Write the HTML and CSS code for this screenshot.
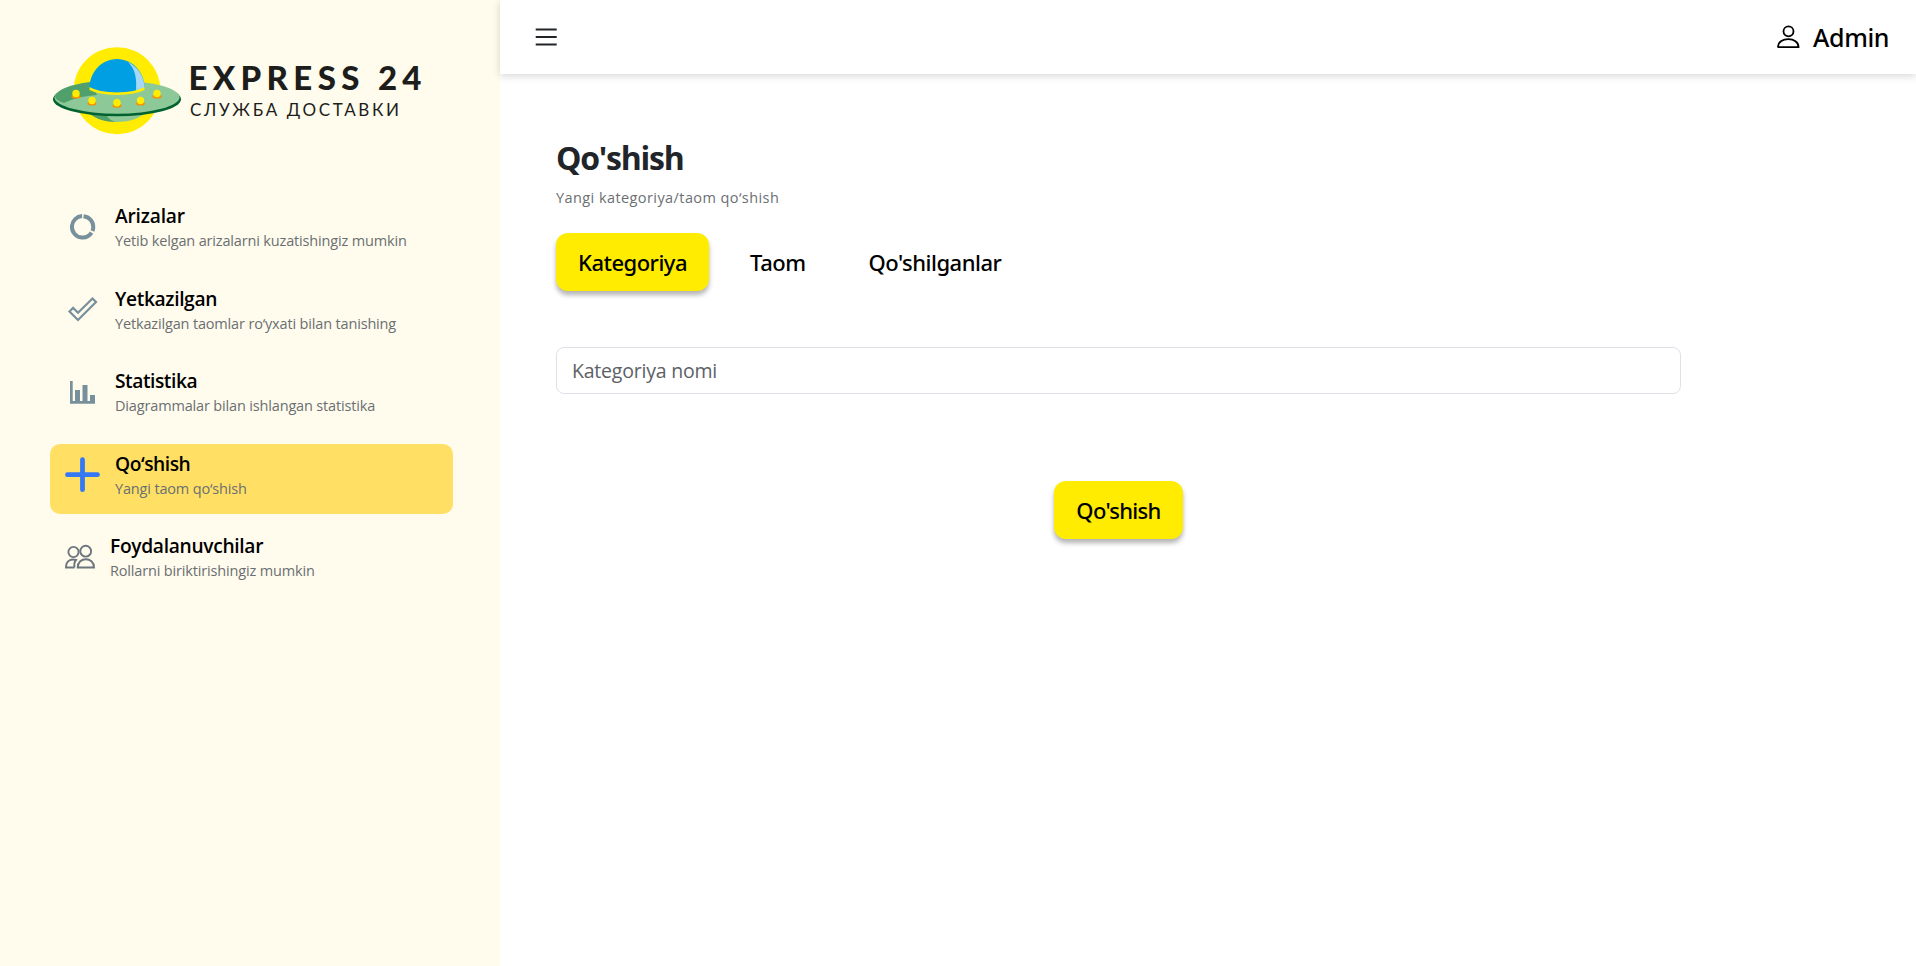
FILE: index.html
```
<!DOCTYPE html>
<html lang="uz">
<head>
<meta charset="utf-8">
<title>Express 24</title>
<link rel="stylesheet" href="styles.css">
</head>
<body>
<div class="layout">
  <aside class="sidebar">
    <svg class="logo" viewBox="0 0 400 100" width="400" height="100">
      <circle cx="67" cy="50.700" r="43.500" fill="#ffec00"/>
      <path d="M36 70 L98 70 Q88 82 67 82 Q48 82 36 70Z" fill="#8dc896"/>
      <path d="M36 70 L55 73 Q58 80 66 82 Q46 82 36 70Z" fill="#4fa06a"/>
      <ellipse cx="67" cy="59.300" rx="64" ry="17" fill="#00632f"/>
      <ellipse cx="67" cy="57.200" rx="62.500" ry="16.500" fill="#8dc898"/>
      <path d="M5 56 Q10 46 40 42 L47 55 Q28 56 14 63 Q5 60 5 56Z" fill="#4fa06a"/>
      <path d="M39.500 49 C39 33 51 19 67 19 C83 19 95 33 94.500 49 C84 54 50 54 39.500 49Z" fill="#009ee3"/>
      <path d="M78 22 C88 27 95 37 94.500 49 Q90 51 86 51.500 C87 37 85 29 78 22Z" fill="#a5d8f7"/>
      <path d="M39.500 47 Q48 52 67 52.500 Q86 52 94.500 47 V50 Q86 54.500 67 55 Q48 54.500 39.500 50Z" fill="#ffec00"/>
      <g fill="#f39200"><ellipse cx="26" cy="56.500" rx="4.500" ry="2"/><ellipse cx="42" cy="63.500" rx="4.500" ry="2"/><ellipse cx="67" cy="65.700" rx="4.500" ry="2"/><ellipse cx="90.500" cy="63.500" rx="4.500" ry="2"/><ellipse cx="107" cy="56.500" rx="4.500" ry="2"/></g>
      <g fill="#ffec00"><circle cx="26" cy="53.500" r="3.700"/><circle cx="42" cy="60.500" r="3.700"/><circle cx="67" cy="62.700" r="3.700"/><circle cx="90.500" cy="60.500" r="3.700"/><circle cx="107" cy="53.500" r="3.700"/></g>
      <text class="logo-name" x="138.500" y="50" textLength="233">EXPRESS 24</text>
      <text class="logo-sub" x="140" y="75.500" textLength="209">СЛУЖБА ДОСТАВКИ</text>
    </svg>
    <nav class="menu">
      <a class="item">
        <svg class="icon" viewBox="0 0 36 36"><circle cx="17.600" cy="17.800" r="10.700" fill="none" stroke="#78909c" stroke-width="4" stroke-dasharray="20 1.900 43.400 1.930" transform="rotate(-85 17.600 17.800)"/></svg>
        <span class="copy"><b class="t t1">Arizalar</b><small class="s">Yetib kelgan arizalarni kuzatishingiz mumkin</small></span>
      </a>
      <a class="item">
        <svg class="icon" viewBox="0 0 36 36"><path d="M4.500 19.500 L8.100 15.900 L13 20.800 L27.500 6.500 L31 10 L13 28Z" fill="none" stroke="#78909c" stroke-width="2.200"/></svg>
        <span class="copy"><b class="t t2">Yetkazilgan</b><small class="s">Yetkazilgan taomlar ro‘yxati bilan tanishing</small></span>
      </a>
      <a class="item">
        <svg class="icon" viewBox="0 0 36 36"><path d="M5 7H7.700V27H10V16H15V27H17.500V11H22.500V27H25V21H30V29.700H5Z" fill="#78909c"/></svg>
        <span class="copy"><b class="t t3">Statistika</b><small class="s">Diagrammalar bilan ishlangan statistika</small></span>
      </a>
      <a class="item active">
        <svg class="icon" viewBox="0 0 36 36"><path d="M17.500 2.700V32.700M2.500 17.700H32.500" stroke="#3578f6" stroke-width="4.800" stroke-linecap="round"/></svg>
        <span class="copy"><b class="t t4">Qo‘shish</b><small class="s">Yangi taom qo‘shish</small></span>
      </a>
      <a class="item">
        <svg class="icon users" viewBox="0 0 31 36" fill="none" stroke="#6c757d" stroke-width="1.900"><circle cx="8.500" cy="13" r="5.100"/><circle cx="20.700" cy="12.200" r="5.400"/><path d="M12.700 28.500H29C29 17.500 12.700 17.500 12.700 28.500ZM9.500 28.500H1C1 21.500 6.500 19.500 11 21Q8.700 23.500 9.500 28.500"/></svg>
        <span class="copy"><b class="t t5">Foydalanuvchilar</b><small class="s">Rollarni biriktirishingiz mumkin</small></span>
      </a>
    </nav>
  </aside>
  <div class="page">
    <header class="topbar">
      <svg class="burger" viewBox="0 0 22 20" width="22" height="20"><path d="M.7 2.500H21.700M.7 10H21.700M.7 17.500H21.700" stroke="#212529" stroke-width="1.800"/></svg>
      <div class="user">
        <svg viewBox="0 0 24 24" width="24" height="24" fill="none" stroke="#000" stroke-width="1.800"><circle cx="12.500" cy="6.300" r="5"/><path d="M2.500 22.200H22.500C22.800 11.500 2.200 11.500 2 21.500Q2 22.200 2.500 22.200Z"/></svg>
        <span class="admin">Admin</span>
      </div>
    </header>
    <main class="content">
      <h1 class="title">Qo'shish</h1>
      <p class="lead">Yangi kategoriya/taom qo‘shish</p>
      <div class="tabs">
        <button class="btn">Kategoriya</button>
        <button class="tab">Taom</button>
        <button class="tab">Qo'shilganlar</button>
      </div>
      <div class="field">Kategoriya nomi</div>
      <div class="actions"><button class="btn submit">Qo'shish</button></div>
    </main>
  </div>
</div>
</body>
</html>
```
FILE: styles.css
```
* { box-sizing: border-box; }
body { margin: 0; font-family: "Open Sans", "Noto Sans", sans-serif; color: #212529; background: #fff; }
.layout { display: flex; height: 966px; overflow: hidden; }
.sidebar { width: 500px; flex: none; background: #fffced; padding: 40px 47px 0 50px; }
.logo { display: block; }
.logo-name { font: 900 33px Lato, sans-serif; fill: #1d1d1b; }
.logo-sub { font: 400 17px Lato, sans-serif; fill: #1d1d1b; }
.menu { display: flex; flex-direction: column; gap: 12.600px; margin-top: 56px; }
.item { display: flex; gap: 14px; height: 70px; padding: 13px 15px 0; border-radius: 10px; }
.active { background: #ffdf64; }
.icon { width: 36px; height: 36px; flex: none; }
.users { width: 31px; }
.copy { display: flex; flex-direction: column; white-space: nowrap; margin-top: -6px; align-items: flex-start; }
.t { font-size: 19.200px; font-weight: 600; line-height: 26px; color: #000; }
.t1 { letter-spacing: -.2px; }
.t2 { letter-spacing: -.36px; }
.t3 { letter-spacing: -.45px; }
.t4 { letter-spacing: -.45px; }
.t5 { letter-spacing: -.32px; }
.s { font-size: 14.500px; line-height: 23px; letter-spacing: -.16px; color: #6b6f72; }
.page { flex: 1; }
.topbar { position: relative; height: 74px; display: flex; align-items: center; justify-content: space-between; padding: 0 27px 0 35px; background: #fff; box-shadow: 0 2px 8px rgba(0,0,0,.16); }
.user { display: flex; align-items: center; gap: 13px; color: #000; font: 500 25px "Noto Sans", sans-serif; letter-spacing: -.42px; }
.content { padding: 63px 235px 0 56px; }
.title { margin: 0; font-size: 32px; line-height: 42px; font-weight: 700; letter-spacing: -1.250px; }
.lead { margin: 8px 0 0; font-size: 14.500px; line-height: 22px; letter-spacing: .42px; color: #6b6f72; }
.tabs { display: flex; gap: 19px; margin-top: 24px; }
button { font: 500 22px "Noto Sans", sans-serif; letter-spacing: -.5px; border: 0; background: none; height: 58px; padding: 0 22px; color: #000; white-space: nowrap; }
.submit { letter-spacing: -.7px; }
.btn { background: #ffec00; border-radius: 12px; box-shadow: 0 4px 5px rgba(0,0,0,.3); }
.field { height: 47px; margin-top: 56px; border: 1px solid #dee2e6; border-radius: 8px; padding: 0 15px; font-size: 19.500px; letter-spacing: -.22px; line-height: 45px; color: #5c6166; }
.actions { display: flex; justify-content: center; margin-top: 87px; }
```
